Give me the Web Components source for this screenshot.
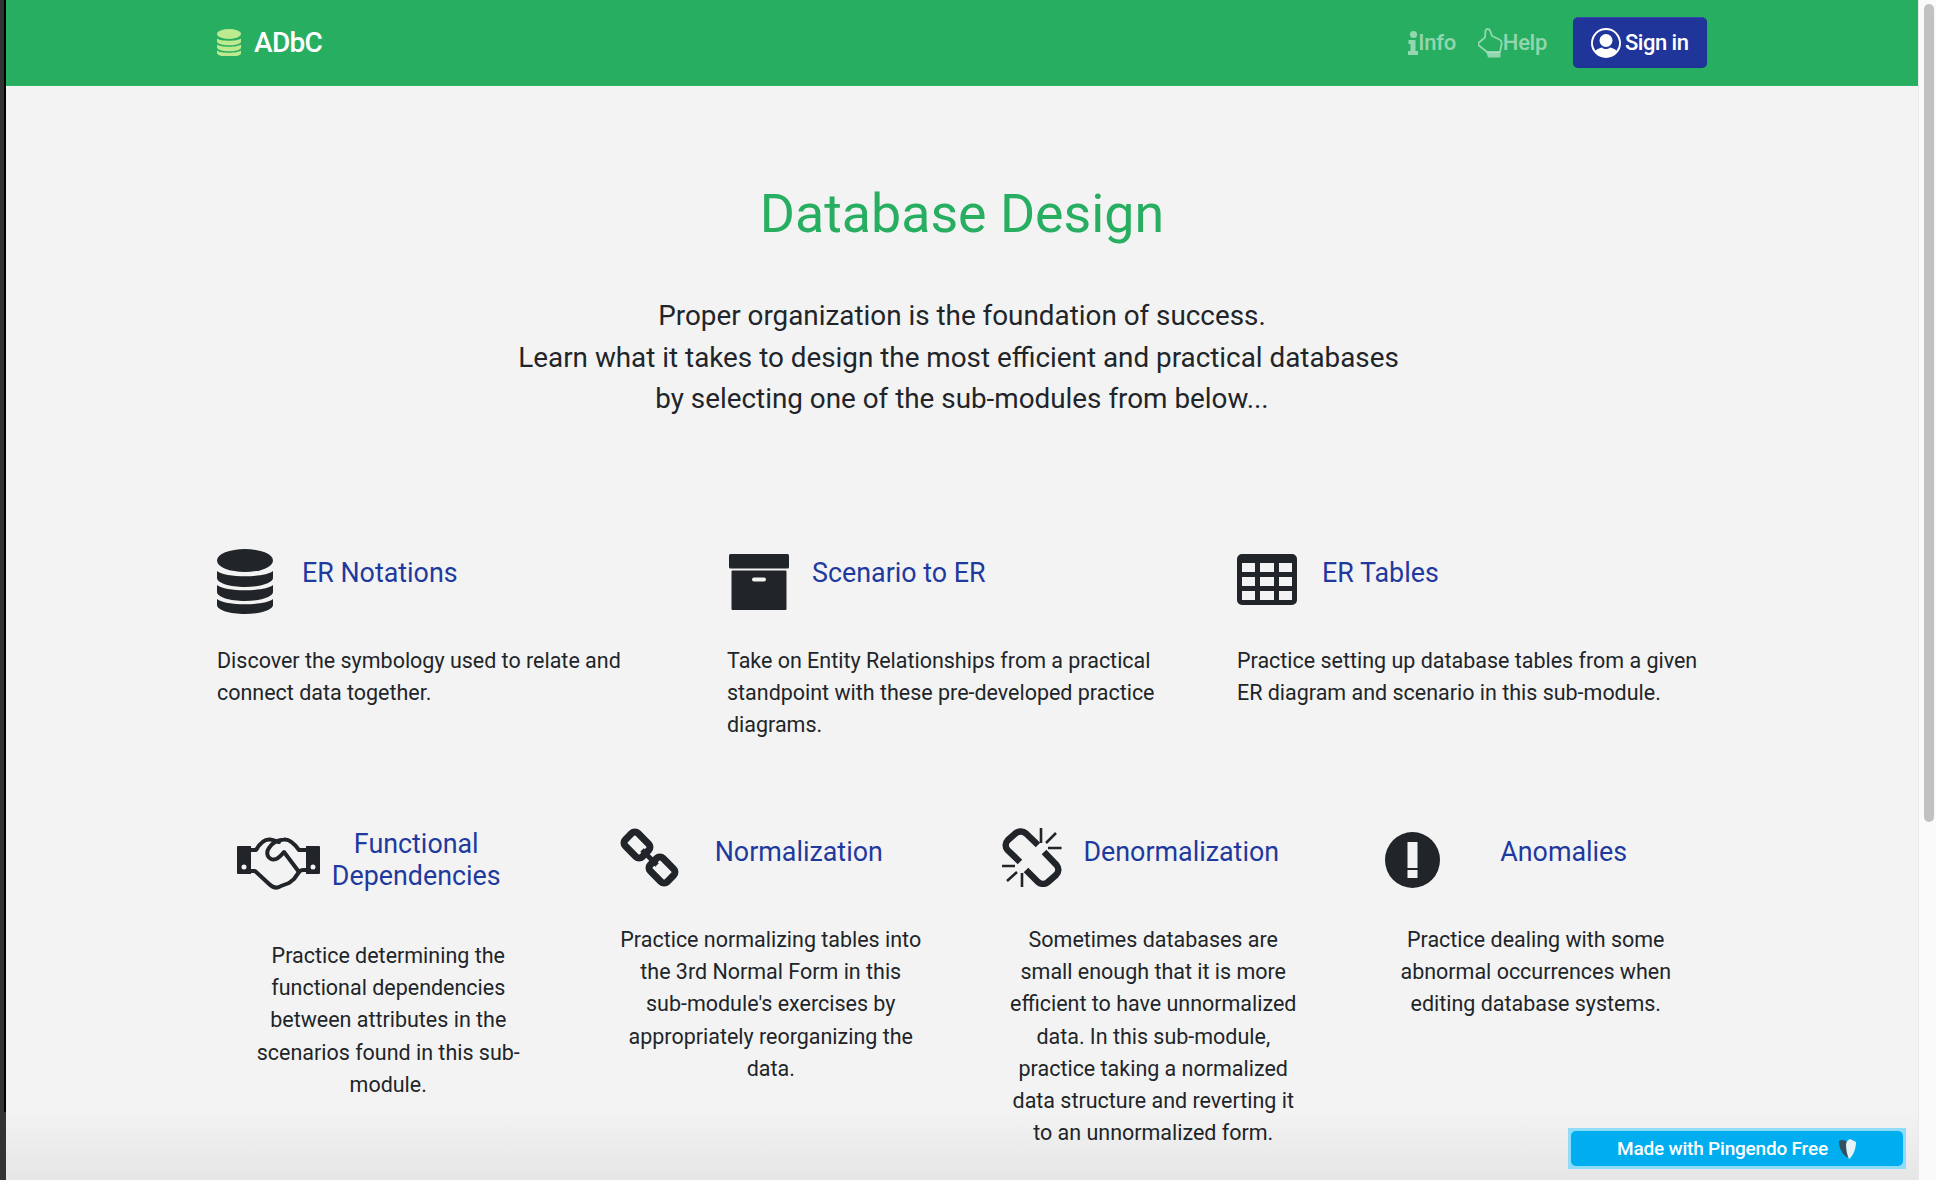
<!DOCTYPE html>
<html lang="en">
<head>
<meta charset="utf-8">
<title>Database Design</title>
<style>
  html, body { margin: 0; height: 1180px; overflow: hidden; background: #f3f3f3; }
  body { font-family: Roboto, "Liberation Sans", sans-serif; color: #212529; }
</style>
</head>
<body>
<adbc-page>
  <adbc-nav slot="nav"></adbc-nav>
  <adbc-hero heading="Database Design">
    Proper organization is the foundation of success.<br>
    Learn what it takes to design the most efficient and practical databases&nbsp;<br>
    by selecting one of the sub-modules from below...
  </adbc-hero>
  <adbc-row columns="3">
    <adbc-card heading="ER Notations">
      <adbc-icon slot="icon" name="database"></adbc-icon>
      Discover the symbology used to relate and connect data together.
    </adbc-card>
    <adbc-card heading="Scenario to ER">
      <adbc-icon slot="icon" name="archive" style="margin:5px 0 0 2px"></adbc-icon>
      Take on Entity Relationships from a practical standpoint with these pre-developed practice diagrams.
    </adbc-card>
    <adbc-card heading="ER Tables">
      <adbc-icon slot="icon" name="table" style="margin-top:5px"></adbc-icon>
      Practice setting up database tables from a given ER diagram and scenario in this sub-module.
    </adbc-card>
  </adbc-row>
  <adbc-row columns="4">
    <adbc-card center heading="Functional Dependencies">
      <adbc-icon slot="icon" name="handshake" style="margin-top:9px"></adbc-icon>
      Practice determining the functional dependencies between attributes in the scenarios found in this sub-module.
    </adbc-card>
    <adbc-card center heading="Normalization">
      <adbc-icon slot="icon" name="chain" style="margin-top:0"></adbc-icon>
      Practice normalizing tables into the 3rd Normal Form in this sub-module's exercises by appropriately reorganizing the data.
    </adbc-card>
    <adbc-card center heading="Denormalization">
      <adbc-icon slot="icon" name="chain-broken" style="margin-top:0"></adbc-icon>
      Sometimes databases are small enough that it is more efficient to have unnormalized data. In this sub-module, practice taking a normalized data structure and reverting it to an unnormalized form.
    </adbc-card>
    <adbc-card center heading="Anomalies">
      <adbc-icon slot="icon" name="alert" style="margin-top:4px"></adbc-icon>
      Practice dealing with some abnormal occurrences when editing database systems.
    </adbc-card>
  </adbc-row>
  <adbc-badge slot="overlay">Made with Pingendo Free</adbc-badge>
</adbc-page>

<script>
(function(){

// viewBox width, height, markup
const ICONS = {
  database: [56, 65, `
    <ellipse cx="28" cy="11.5" rx="28" ry="11.5"/>
    <path d="M0 22C8 29 48 29 56 22V29C56 34 43 38 28 38S0 34 0 29Z"/>
    <path d="M0 36C8 43 48 43 56 36V43C56 48 43 52 28 52S0 48 0 43Z"/>
    <path d="M0 50C8 57 48 57 56 50V56C56 61 43 65 28 65S0 61 0 56Z"/>`],
  archive: [60, 56, `
    <rect x="0" y="0" width="60" height="14.5" rx="1.5"/>
    <path fill-rule="evenodd" d="M3.5 16.5H56.5A1 1 0 0 1 57.5 17.5V55A1 1 0 0 1 56.5 56H3.5A1 1 0 0 1 2.5 55V17.5A1 1 0 0 1 3.5 16.5ZM25 23.5A2 2 0 0 0 25 27.5H35A2 2 0 0 0 35 23.5Z"/>`],
  table: [60, 51, `
    <path fill-rule="evenodd" d="M5 0H55A5 5 0 0 1 60 5V46A5 5 0 0 1 55 51H5A5 5 0 0 1 0 46V5A5 5 0 0 1 5 0Z
      M5 9V18H18V9Z M23 9V18H37V9Z M42 9V18H55V9Z
      M5 23V32H18V23Z M23 23V32H37V23Z M42 23V32H55V23Z
      M5 37V46H18V37Z M23 37V46H37V37Z M42 37V46H55V37Z"/>`],
  handshake: [83, 53, `
    <path fill-rule="evenodd" d="M1 9H14V37H1A1 1 0 0 1 0 36V10A1 1 0 0 1 1 9ZM7 27.500A2.500 2.500 0 1 0 7 32.500A2.500 2.500 0 0 0 7 27.500Z"/>
    <path fill-rule="evenodd" d="M69 9H82A1 1 0 0 1 83 10V36A1 1 0 0 1 82 37H69ZM76 27.500A2.500 2.500 0 1 0 76 32.500A2.500 2.500 0 0 0 76 27.500Z"/>
    <g fill="none" stroke="currentColor" stroke-width="4" stroke-linejoin="round" stroke-linecap="round">
      <path d="M14 13H19C23 6 28 2 33 2.500C37 3 39 4 42 5"/>
      <path d="M69 13H62C57 6 52 2 47 2.500C40 3 35 6 32 11C29 15 30 20 34 22C38 24 43 20 47 15L62 35"/>
      <path d="M14 34H18L31 46C35 50 40 52 44 49L52 46L57 42L62 35C64 32 66 33 69 33"/>
    </g>`],
  chain: [59, 59, `
    <g fill="none" stroke="currentColor" stroke-width="7">
      <rect x="-12" y="-9" width="24" height="18" rx="4.500" transform="translate(17 17) rotate(45)"/>
      <rect x="-12" y="-9" width="24" height="18" rx="4.500" transform="translate(42 42) rotate(45)"/>
    </g>
    <path fill="none" stroke="currentColor" stroke-width="5" d="M22 22L37 37"/>`],
  'chain-broken': [60, 59, `
    <g fill="none" stroke="currentColor" stroke-width="6.500" stroke-linejoin="round">
      <path d="M36 17L24 5.500C21 3 17 3 14 5L6 12C3 15 3 19 5.500 22L18 34"/>
      <path d="M24 42L36 54C39 56.500 43 56.500 46 54L54 47C57 44 57 40 54.500 37L42 24"/>
    </g>
    <g fill="none" stroke="currentColor" stroke-width="2.600">
      <path d="M39 0V15M54 5L44 15M59.500 20H46M0 38H13M5 53L15 44M20 45V59"/>
    </g>`],
  alert: [55, 56, `
    <path fill-rule="evenodd" d="M27.500 0A27.500 28 0 1 1 27.500 56A27.500 28 0 1 1 27.500 0ZM22.500 10V36H32.500V10ZM22.500 38V46H32.500V38Z"/>`],
  info: [10, 24, `
    <ellipse cx="5.500" cy="3.500" rx="3.600" ry="3.500"/>
    <path d="M.5 9H7.500V20H10V24H0V20H2.500V13H.5Z"/>`],
  hand: [25, 30, `
    <path fill="none" stroke="currentColor" stroke-width="1.800" stroke-linejoin="round"
      d="M7.500 2.500C8.500 .5 11 .5 12 2.500L14 8L21.500 11.500C23.500 12.500 24 14 23.500 16.500L22 24H9L1 17.500C0 16.500 .5 15 1.500 14L7 9.500Z"/>
    <path d="M8.500 24.500H22.500V29.500H10Z"/>`],
  user: [30, 30, `
    <path fill-rule="evenodd" d="M15 0A15 15 0 1 1 15 30A15 15 0 1 1 15 0ZM15 2A13 13 0 0 0 4.600 22.800C6 21 8.500 20 11 19.500C12 20.500 13.500 21 15 21S18 20.500 19 19.500C21.500 20 24 21 25.400 22.800A13 13 0 0 0 15 2Z"/>
    <circle cx="15" cy="12.500" r="6.500"/>`]
};

const iconTemplate = document.createElement('template');
iconTemplate.innerHTML = `
<style>
  :host{ display: block; line-height: 0; }
  svg{ display: block; fill: currentColor; }
</style>
<svg></svg>`;

customElements.define('adbc-icon', class extends HTMLElement {
  constructor()
  {
    super();
    let shadowRoot = this.attachShadow({mode: 'open'});
    shadowRoot.appendChild(iconTemplate.content.cloneNode(true));
    const [w, h, body] = ICONS[this.getAttribute('name')];
    const scale = +(this.getAttribute('scale') || 1);
    const svg = shadowRoot.querySelector('svg');
    svg.setAttribute('viewBox', `0 0 ${w} ${h}`);
    svg.setAttribute('width', w * scale);
    svg.setAttribute('height', h * scale);
    svg.innerHTML = body;
  }
});

const pageTemplate = document.createElement('template');
pageTemplate.innerHTML = `
<style>
  :host{
    display: flex;
    position: relative;
    height: 1180px;
    overflow: hidden;
  }
  .edge{
    width: 6px;
    flex: none;
    background: linear-gradient(#000, #000) 4px 0 / 2px 1112px no-repeat #333;
  }
  main{
    flex: 1;
    min-width: 0;
    position: relative;
    overflow: hidden;
    background: #f3f3f3;
  }
  .fade{
    position: absolute;
    left: 0;
    right: 0;
    bottom: 0;
    height: 72px;
    background: linear-gradient(rgba(0,0,0,0), rgba(0,0,0,.055));
    pointer-events: none;
  }
  .track{
    width: 18px;
    flex: none;
    box-sizing: border-box;
    background: #fafafa;
    border-left: 1px solid #e9e9e9;
    padding: 4px 2px 0 5px;
  }
  .thumb{
    height: 818px;
    background: #c1c1c1;
    border-radius: 6px;
  }
</style>
<div class=edge></div>
<main>
  <slot name=nav></slot>
  <slot></slot>
  <div class=fade></div>
</main>
<div class=track><div class=thumb></div></div>
<slot name=overlay></slot>`;

customElements.define('adbc-page', class extends HTMLElement {
  constructor()
  {
    super();
    this.attachShadow({mode: 'open'}).appendChild(pageTemplate.content.cloneNode(true));
  }
});

const navTemplate = document.createElement('template');
navTemplate.innerHTML = `
<style>
  :host{
    display: flex;
    align-items: center;
    height: 85px;
    padding: 0 211px;
    background: #27ae60;
    border-bottom: 1px solid #2bb566;
    font-size: 22px;
  }
  .brand{
    display: flex;
    align-items: center;
    gap: 13px;
    color: #fff;
    font-size: 28px;
    font-weight: 500;
    letter-spacing: -.7px;
  }
  .brand adbc-icon{ color: #bdea8f; }
  .links{
    margin-left: auto;
    display: flex;
    align-items: center;
    color: rgba(255,255,255,.5);
    font-weight: 500;
    letter-spacing: -.3px;
  }
  .link{ display: flex; align-items: center; }
  .link + .link{ margin-left: 22px; }
  button{
    display: flex;
    align-items: center;
    gap: 4px;
    margin-left: 26px;
    height: 51px;
    width: 134px;
    padding: 0 0 0 17px;
    border: 1px solid #1d3190;
    border-top-color: #3549a8;
    border-radius: 5px;
    background: #20359a;
    color: #fff;
    font: 500 22px Roboto, "Liberation Sans", sans-serif;
    letter-spacing: -.5px;
  }
</style>
<div class=brand><adbc-icon name=database scale=.43></adbc-icon>ADbC</div>
<div class=links>
  <div class=link><adbc-icon name=info></adbc-icon>Info</div>
  <div class=link><adbc-icon name=hand></adbc-icon>Help</div>
  <button><adbc-icon name=user></adbc-icon>Sign in</button>
</div>`;

customElements.define('adbc-nav', class extends HTMLElement {
  constructor()
  {
    super();
    this.attachShadow({mode: 'open'}).appendChild(navTemplate.content.cloneNode(true));
  }
});

const heroTemplate = document.createElement('template');
heroTemplate.innerHTML = `
<style>
  :host{
    display: block;
    padding-top: 95px;
    text-align: center;
  }
  h1{
    margin: 0 0 49px;
    color: #27ae60;
    font-size: 53.700px;
    font-weight: 400;
    line-height: 65px;
  }
  p{
    margin: 0 0 129px;
    font-size: 27.840px;
    line-height: 41.500px;
  }
</style>
<h1></h1>
<p><slot></slot></p>`;

customElements.define('adbc-hero', class extends HTMLElement {
  constructor()
  {
    super();
    let shadowRoot = this.attachShadow({mode: 'open'});
    shadowRoot.appendChild(heroTemplate.content.cloneNode(true));
    shadowRoot.querySelector('h1').textContent = this.getAttribute('heading');
  }
});

const rowTemplate = document.createElement('template');
rowTemplate.innerHTML = `
<style>
  :host{
    display: grid;
    margin: 0 191px 86.200px;
    padding: 0;
  }
  :host([columns='3']){ grid-template-columns: repeat(3, 1fr); }
  :host([columns='4']){ grid-template-columns: repeat(4, 1fr); }
</style>
<slot></slot>`;

customElements.define('adbc-row', class extends HTMLElement {
  constructor()
  {
    super();
    this.attachShadow({mode: 'open'}).appendChild(rowTemplate.content.cloneNode(true));
  }
});

const cardTemplate = document.createElement('template');
cardTemplate.innerHTML = `
<style>
  :host{
    display: block;
    padding: 0 20px;
    font-size: 21.470px;
    line-height: 32.200px;
  }
  :host([center]){
    padding: 0 40px;
    text-align: center;
  }
  .head{
    display: grid;
    grid-template-columns: 85px 1fr;
    align-items: center;
    min-height: 49px;
    margin-bottom: 47.300px;
  }
  :host([center]) .head{ grid-template-columns: 56px 1fr; }
  .icon{ align-self: start; height: 0; }
  h4{
    margin: 0;
    color: #1f3a9e;
    font-size: 26.850px;
    font-weight: 400;
    line-height: 32.500px;
  }
  p{ margin: 0; }
</style>
<div class=head>
  <div class=icon><slot name=icon></slot></div>
  <h4></h4>
</div>
<p><slot></slot></p>`;

customElements.define('adbc-card', class extends HTMLElement {
  constructor()
  {
    super();
    let shadowRoot = this.attachShadow({mode: 'open'});
    shadowRoot.appendChild(cardTemplate.content.cloneNode(true));
    shadowRoot.querySelector('h4').textContent = this.getAttribute('heading');
  }
});

const badgeTemplate = document.createElement('template');
badgeTemplate.innerHTML = `
<style>
  :host{
    position: absolute;
    left: 1568px;
    top: 1128px;
    width: 338px;
    height: 41px;
    box-sizing: border-box;
    border: 3px solid #8fdcf8;
    background: #8fdcf8;
  }
  .inner{
    height: 100%;
    display: flex;
    align-items: center;
    justify-content: center;
    gap: 10px;
    border-radius: 5px;
    background: #00aeef;
    color: #fff;
    font-size: 19px;
    font-weight: 500;
    letter-spacing: -.2px;
  }
  svg{ display: block; filter: blur(.6px); }
</style>
<div class=inner>
  <slot></slot>
  <svg width=19 height=22 viewBox="0 0 19 22">
    <path fill="#33505f" d="M1 3C4 1 7 2 9 4L11 20C6 19 1 12 1 3Z"/>
    <path fill="#e6f4f8" d="M8 6C9 3 10 2 12 1L18 4C18 11 15 18 11 21C9 17 8 11 8 6Z"/>
  </svg>
</div>`;

customElements.define('adbc-badge', class extends HTMLElement {
  constructor()
  {
    super();
    this.attachShadow({mode: 'open'}).appendChild(badgeTemplate.content.cloneNode(true));
  }
});

})();
</script>
</body>
</html>
